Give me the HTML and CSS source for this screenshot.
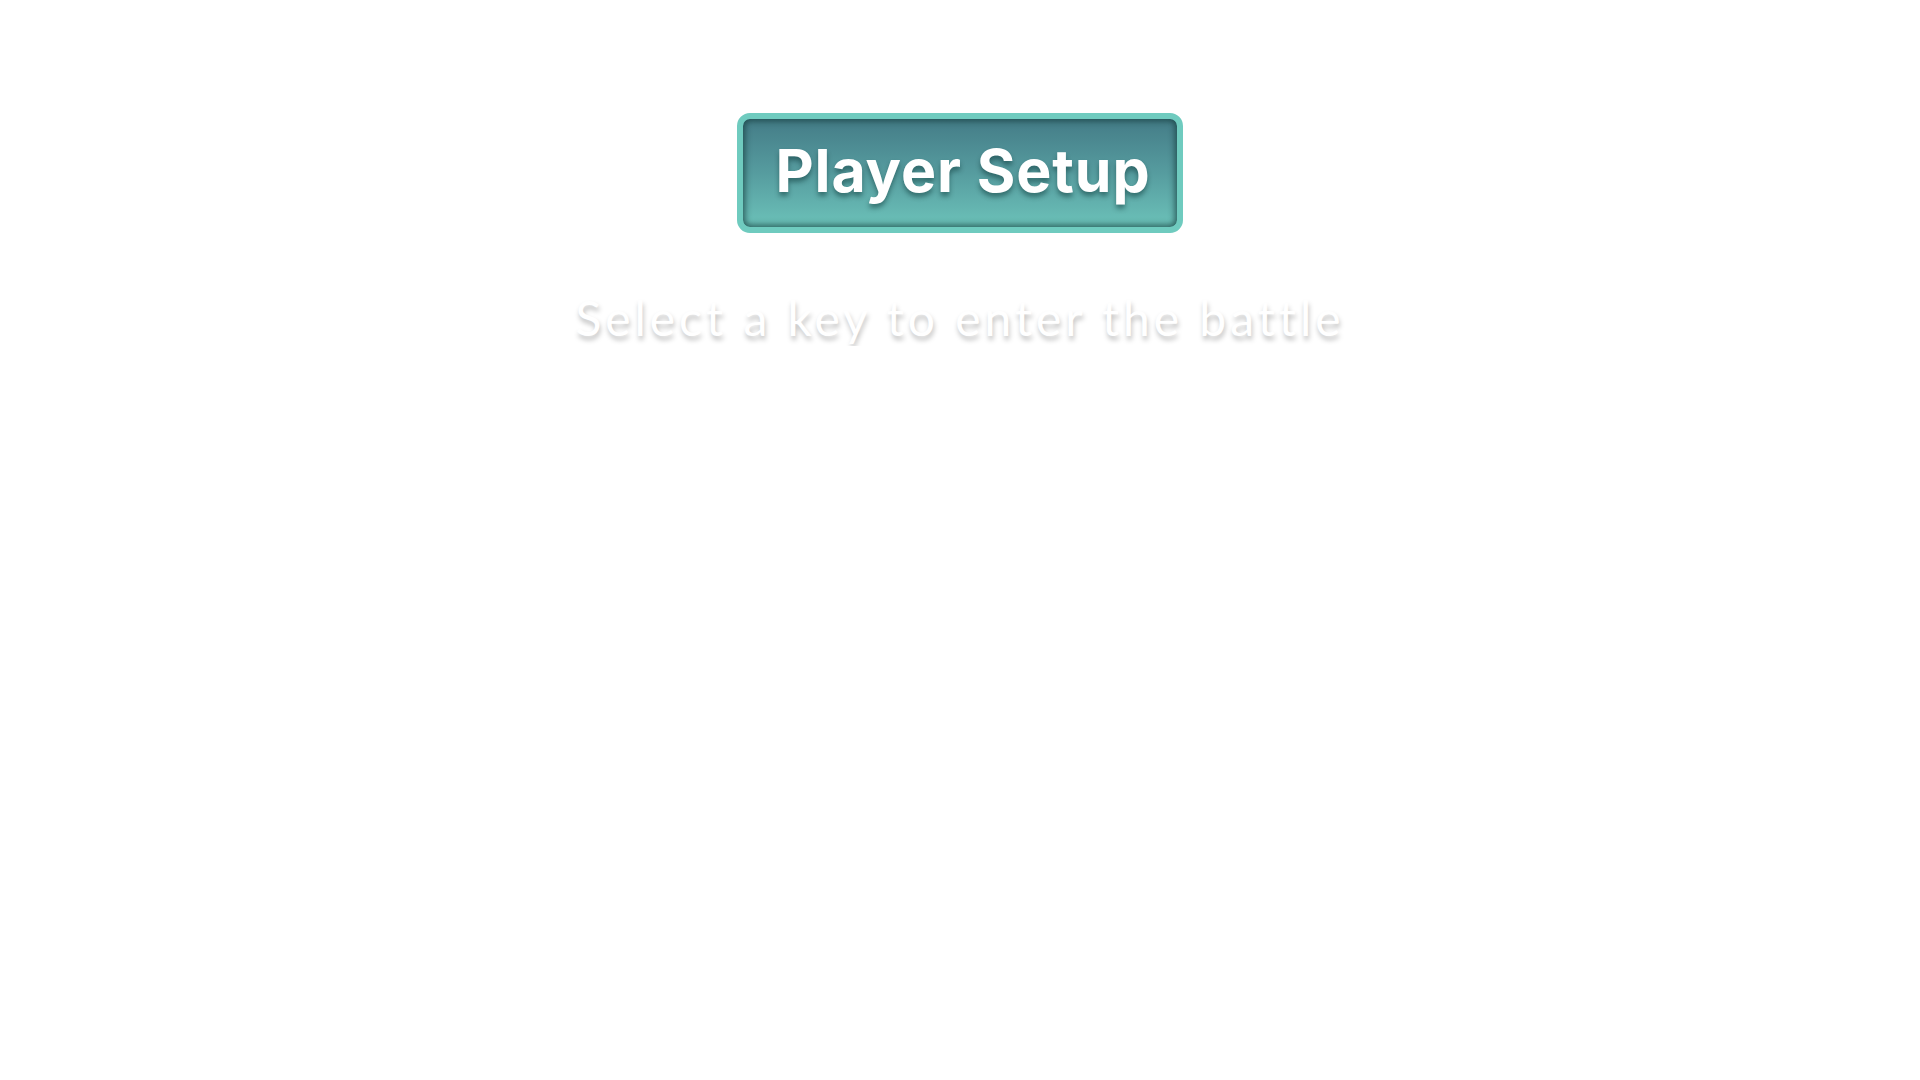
FILE: index.html
```html
<!DOCTYPE html>
<html lang="en">
<head>
<meta charset="utf-8">
<title>Player Setup</title>
<link rel="stylesheet" href="styles.css">
</head>
<body>
<main class="setup">
  <h1 class="title-badge">Player Setup</h1>
  <p class="subtitle">Select a key to enter the battle</p>
</main>
</body>
</html>
```
FILE: styles.css
```css
html, body {
  margin: 0;
  padding: 0;
  background: #ffffff;
}
.setup {
  display: flex;
  flex-direction: column;
  align-items: center;
  padding-top: 113px;
}
.title-badge {
  margin: 0;
  box-sizing: border-box;
  width: 446px;
  height: 120px;
  display: flex;
  align-items: center;
  justify-content: center;
  border: 6px solid #6fcbbf;
  border-radius: 13px;
  background: linear-gradient(to bottom, #447c87 0%, #569c9f 50%, #6cc2b9 100%);
  box-shadow: inset 0 0 6px 2px rgba(20, 60, 60, 0.75);
  font-family: "Inter", "Open Sans", sans-serif;
  font-weight: 700;
  font-size: 59px;
  letter-spacing: 0.9px;
  color: #ffffff;
  text-shadow: 0 4px 5px rgba(0, 40, 40, 0.45);
  padding: 0 0 6px 6px;
}
.subtitle {
  margin: 56px 0 0;
  font-family: "Lato", "Open Sans", sans-serif;
  font-weight: 400;
  font-size: 48px;
  letter-spacing: 3.95px;
  color: #ffffff;
  text-shadow: 1px 4px 5px rgba(0, 0, 0, 0.25);
}
```
